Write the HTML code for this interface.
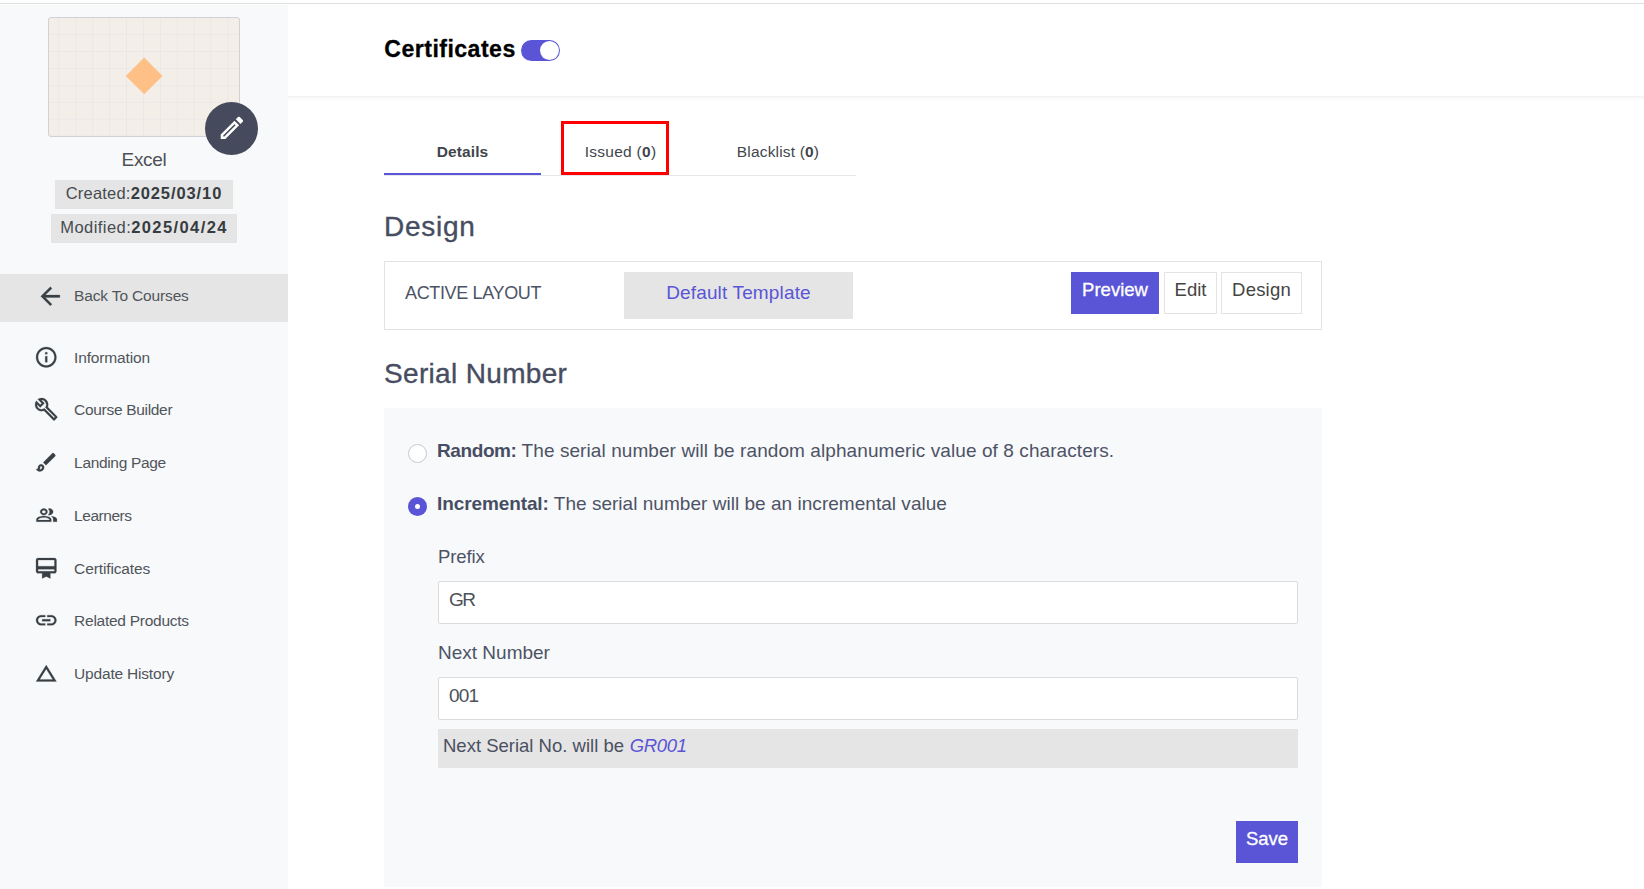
<!DOCTYPE html>
<html lang="en">
<head>
<meta charset="utf-8">
<title>Certificates</title>
<style>
*{box-sizing:border-box;margin:0;padding:0}
html,body{width:1644px;height:889px;overflow:hidden;background:#fff}
body{font-family:"Liberation Sans",Arial,sans-serif;color:#444;position:relative}
.abs{position:absolute}
.topline{left:0;top:3px;width:1644px;height:1px;background:#e0e2e2}
.sidebar{left:0;top:5px;width:288px;height:884px;background:#f8f9fb}
.thumb{left:48px;top:17px;width:192px;height:120px;border:1px solid #d2d2d6;border-radius:3px;background-color:#f3efe8;
 background-image:linear-gradient(#ebe7e7 1px,transparent 1px),linear-gradient(90deg,#ebe7e7 1px,transparent 1px);
 background-size:16.92px 16.92px;background-position:9.4px 16.1px}
.diamond{left:130.6px;top:63.0px;width:26.4px;height:26.4px;background:#ffc088;transform:rotate(45deg)}
.editbtn{left:205px;top:102px;width:53px;height:53px;border-radius:50%;background:#464a5d}
.cname{left:0;width:288px;top:149.4px;text-align:center;font-size:19px;line-height:22px;color:#4d5156;letter-spacing:-.3px}
.badge{background:#e5e5e5;height:29px;line-height:26.6px;font-size:16.5px;color:#454b50;text-align:center;white-space:nowrap;letter-spacing:.2px}
.badge b{color:#363c41;letter-spacing:.9px}
.back{left:0;top:274px;width:288px;height:48px;background:#e5e5e5}
.mi{left:74.1px;margin-top:-.4px;font-size:15.5px;line-height:20px;color:#50555a;white-space:nowrap;letter-spacing:-0.25px}
.ico{left:33.6px;width:24.5px;height:24.5px}
.ico svg{display:block;width:100%;height:100%;fill:#394045;stroke:#394045;stroke-width:.22px;overflow:visible}
.header{left:288px;top:96px;width:1356px;height:5px;background:linear-gradient(rgba(0,0,0,.06),rgba(0,0,0,.02) 40%,rgba(0,0,0,0))}
h1{left:384.3px;top:34px;font-size:23.1px;line-height:30px;color:#000;font-weight:bold;white-space:nowrap;letter-spacing:.47px;-webkit-text-stroke:.3px #000}
.toggle{left:521px;top:40px;width:39px;height:21px;border-radius:11px;background:#5a55d6}
.toggle i{position:absolute;right:1px;top:1px;width:19px;height:19px;border-radius:50%;background:#fff}
.tab{top:141.4px;font-size:15.5px;line-height:22px;color:#3f454b;white-space:nowrap;text-align:center}
h2{left:384px;font-size:28px;line-height:36px;font-weight:normal;color:#474d61;white-space:nowrap;-webkit-text-stroke:.35px #474d61}
.box{left:384px;top:261px;width:938px;height:69px;border:1px solid #e3e3e3;background:#fff}
.btn{top:272px;height:42px;line-height:34.6px;font-size:18.5px;text-align:center;border:1px solid #e3e3e3;color:#444;background:#fff;white-space:nowrap}
.primary{background:#5955d6;border-color:#5955d6;color:#fff;-webkit-text-stroke:.3px #fff}
.panel{left:384px;top:408px;width:938px;height:479px;background:#f8f9fa}
.t18{font-size:19px;line-height:24px;color:#4d5366;white-space:nowrap}
.t18 b{color:#474e63}
.radio{left:408px;width:19px;height:19px;border-radius:50%;border:1px solid #c6c8d4;background:#fff}
.radio.on{border:none;background:#5a55d6}
.radio.on i{position:absolute;left:6.7px;top:6.5px;width:5px;height:5px;border-radius:50%;background:#fff}
.input{left:438px;width:860px;height:43px;border:1px solid #dcdcdc;background:#fff;border-radius:2px;padding-left:10px;line-height:36px;font-size:19px;color:#4d5158}
.info{left:438px;top:729px;width:860px;height:39px;background:#e5e5e5;padding-left:5px;line-height:34px;font-size:18.5px;color:#4a5061}
.info i{color:#5a55d6;letter-spacing:-.3px;margin-left:.6px}
</style>
</head>
<body>
<div class="abs topline"></div>
<div class="abs sidebar"></div>
<div class="abs thumb"></div>
<div class="abs diamond"></div>
<div class="abs editbtn"><svg viewBox="0 0 24 24" style="position:absolute;left:11.7px;top:10.6px;width:29.8px;height:29.8px;fill:#fff"><path d="M14.06 9.02l.92.92L5.92 19H5v-.92l9.06-9.06M17.66 3c-.25 0-.51.1-.7.29l-1.83 1.83 3.75 3.75 1.83-1.83c.39-.39.39-1.02 0-1.41l-2.34-2.34c-.2-.2-.45-.29-.71-.29zm-3.6 3.19L3 17.25V21h3.75L17.81 9.94l-3.75-3.75z"/></svg></div>
<div class="abs cname">Excel</div>
<div class="abs badge" style="left:55px;top:180px;width:178px">Created:<b>2025/03/10</b></div>
<div class="abs badge" style="left:51px;top:214px;width:186px;letter-spacing:.45px">Modified:<b style="letter-spacing:1.4px">2025/04/24</b></div>

<div class="abs back"></div>
<div class="abs ico" style="left:36.3px;top:282.2px;width:28.6px;height:28.6px"><svg viewBox="0 0 24 24"><path d="M20 11H7.83l5.59-5.59L12 4l-8 8 8 8 1.41-1.41L7.83 13H20v-2z"/></svg></div>
<div class="abs mi" style="top:286px;letter-spacing:-.15px">Back To Courses</div>

<div class="abs ico" style="top:345px"><svg viewBox="0 0 24 24"><path d="M11 7h2v2h-2zm0 4h2v6h-2zm1-9C6.48 2 2 6.48 2 12s4.48 10 10 10 10-4.48 10-10S17.52 2 12 2zm0 18c-4.41 0-8-3.59-8-8s3.59-8 8-8 8 3.59 8 8-3.59 8-8 8z"/></svg></div>
<div class="abs mi" style="top:348px;letter-spacing:-.16px">Information</div>

<div class="abs ico" style="top:397px"><svg viewBox="0 0 24 24"><path d="M22.61 18.99l-9.08-9.08c.93-2.34.45-5.1-1.44-7C9.790.61 6.210.4 3.660 2.260L7.500 6.110 6.080 7.520 2.250 3.690C.39 6.230.6 9.820 2.900 12.110c1.860 1.860 4.570 2.350 6.890 1.480l9.110 9.110c.39.39 1.020.39 1.410 0l2.300-2.300c.4-.38.4-1.010 0-1.410zm-3 1.600l-9.460-9.460c-.61.45-1.290.72-2 .82-1.360.2-2.790-.21-3.830-1.250C3.370 9.760 2.930 8.500 3 7.260l3.090 3.090 4.240-4.240-3.090-3.090c1.240-.07 2.490.37 3.440 1.310 1.080 1.080 1.490 2.570 1.240 3.960-.12.71-.42 1.370-.88 1.960l9.450 9.450-.88.890z"/></svg></div>
<div class="abs mi" style="top:400px;letter-spacing:-.31px">Course Builder</div>

<div class="abs ico" style="top:450px"><svg viewBox="0 0 24 24"><path d="M7 16c.55 0 1 .45 1 1 0 1.100-.9 2-2 2-.17 0-.33-.02-.5-.05.31-.55.5-1.210.5-1.950 0-.55.45-1 1-1M18.670 3c-.26 0-.51.1-.71.29L9 12.250 11.750 15l8.960-8.960c.39-.39.39-1.020 0-1.410l-1.340-1.340c-.2-.2-.45-.29-.7-.29zM7 14c-1.660 0-3 1.340-3 3 0 1.310-1.160 2-2 2 .92 1.220 2.490 2 4 2 2.210 0 4-1.790 4-4 0-1.660-1.340-3-3-3z"/></svg></div>
<div class="abs mi" style="top:453px;letter-spacing:-.33px">Landing Page</div>

<div class="abs ico" style="top:503px"><svg viewBox="0 0 24 24"><g transform="translate(1.4,2.1) scale(.915,.815)"><path d="M16.67 13.130C18.040 14.060 19 15.320 19 17v3h4v-3c0-2.180-3.570-3.470-6.330-3.870zM15 12c2.210 0 4-1.790 4-4s-1.790-4-4-4c-.47 0-.91.1-1.330.24a5.980 5.980 0 0 1 0 7.520c.42.14.86.24 1.330.24zM9 12c2.210 0 4-1.790 4-4s-1.790-4-4-4-4 1.790-4 4 1.790 4 4 4zm0-6c1.100 0 2 .9 2 2s-.9 2-2 2-2-.9-2-2 .9-2 2-2zm0 7c-2.670 0-8 1.340-8 4v3h16v-3c0-2.660-5.330-4-8-4zm6 5H3v-.99C3.200 16.290 6.300 15 9 15s5.800 1.290 6 2v1z"/></g></svg></div>
<div class="abs mi" style="top:506px;letter-spacing:-.46px">Learners</div>

<div class="abs ico" style="top:556px"><svg viewBox="0 0 24 24"><path d="M20 2H4c-1.110 0-2 .89-2 2v11c0 1.110.89 2 2 2h4v5l4-2 4 2v-5h4c1.110 0 2-.89 2-2V4c0-1.110-.89-2-2-2zm0 13H4v-2h16v2zm0-5H4V4h16v6z"/></svg></div>
<div class="abs mi" style="top:559px;letter-spacing:-.12px">Certificates</div>

<div class="abs ico" style="top:608px"><svg viewBox="0 0 24 24"><path d="M3.900 12c0-1.710 1.390-3.100 3.100-3.100h4V7H7c-2.760 0-5 2.240-5 5s2.240 5 5 5h4v-1.900H7c-1.710 0-3.100-1.390-3.100-3.100zM8 13h8v-2H8v2zm9-6h-4v1.900h4c1.710 0 3.100 1.390 3.100 3.100s-1.390 3.100-3.100 3.100h-4V17h4c2.760 0 5-2.240 5-5s-2.240-5-5-5z"/></svg></div>
<div class="abs mi" style="top:611px;letter-spacing:-.26px">Related Products</div>

<div class="abs ico" style="top:661px"><svg viewBox="0 0 24 24"><path d="M12 7.770L18.390 18H5.610L12 7.770M12 4L2 20h20L12 4z"/></svg></div>
<div class="abs mi" style="top:664px;letter-spacing:-.19px">Update History</div>

<div class="abs header"></div>
<h1 class="abs">Certificates</h1>
<div class="abs toggle"><i></i></div>

<div class="abs" style="left:384px;top:175px;width:472px;height:1px;background:#e6e6ea"></div>
<div class="abs" style="left:384px;top:173px;width:157px;height:2px;background:#5a55d6"></div>
<div class="abs tab" style="left:384px;width:157px;font-weight:bold;letter-spacing:.1px">Details</div>
<div class="abs" style="left:561px;top:121px;width:108px;height:54px;border:3px solid #ff0000"></div>
<div class="abs tab" style="left:561px;width:119px;letter-spacing:.27px">Issued (<b>0</b>)</div>
<div class="abs tab" style="left:699px;width:158px;letter-spacing:.17px">Blacklist (<b>0</b>)</div>

<h2 class="abs" style="top:208.6px;letter-spacing:.75px">Design</h2>
<div class="abs box"></div>
<div class="abs t18" style="left:405px;top:281.2px;font-size:18px;letter-spacing:-.35px">ACTIVE LAYOUT</div>
<div class="abs" style="left:624px;top:272px;width:229px;height:47px;background:#e5e5e5;color:#5a55d6;font-size:19px;letter-spacing:.15px;line-height:41.3px;text-align:center;white-space:nowrap">Default Template</div>
<div class="abs btn primary" style="left:1071px;width:88px">Preview</div>
<div class="abs btn" style="left:1164px;width:53px">Edit</div>
<div class="abs btn" style="left:1221px;width:81px;letter-spacing:.2px">Design</div>

<h2 class="abs" style="top:355.9px;letter-spacing:.33px">Serial Number</h2>
<div class="abs panel"></div>
<div class="abs radio" style="top:444px"></div>
<div class="abs t18" style="left:437px;top:438.6px;letter-spacing:.08px"><b style="letter-spacing:-.4px">Random:</b> The serial number will be random alphanumeric value of 8 characters.</div>
<div class="abs radio on" style="top:497px"><i></i></div>
<div class="abs t18" style="left:437px;top:491.6px;letter-spacing:.03px"><b style="letter-spacing:-.1px">Incremental:</b> The serial number will be an incremental value</div>
<div class="abs t18" style="left:438px;top:545px;font-size:18.5px;letter-spacing:-.1px">Prefix</div>
<div class="abs input" style="top:581px;letter-spacing:-1.5px">GR</div>
<div class="abs t18" style="left:438px;top:640.6px">Next Number</div>
<div class="abs input" style="top:677px;letter-spacing:-.8px">001</div>
<div class="abs info">Next Serial No. will be <i>GR001</i></div>
<div class="abs btn primary" style="left:1236px;top:821px;width:62px">Save</div>
</body>
</html>
